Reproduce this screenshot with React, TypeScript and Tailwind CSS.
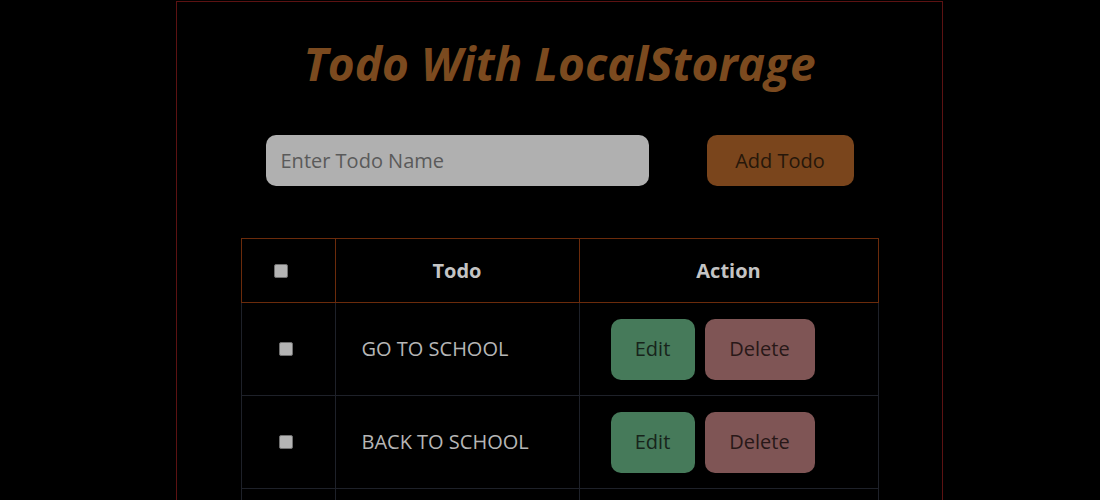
import { useState } from "react";

interface Todo {
  id: number;
  name: string;
  done: boolean;
}

const initialTodos: Todo[] = [
  { id: 1, name: "go to school", done: false },
  { id: 2, name: "back to school", done: false },
  { id: 3, name: "go to home", done: false },
];

const Checkbox = ({ checked, onChange }: { checked: boolean; onChange: () => void }) => (
  <input
    type="checkbox"
    checked={checked}
    onChange={onChange}
    className="appearance-none w-[14px] h-[14px] bg-[#b4b4b4] border border-[#6f6f6f] rounded-[2px] block"
  />
);

const App = () => {
  const [todos, setTodos] = useState<Todo[]>(initialTodos);
  const [name, setName] = useState("");
  const allDone = todos.length > 0 && todos.every((t) => t.done);

  const addTodo = () => {
    if (!name.trim()) return;
    setTodos([...todos, { id: Date.now(), name: name.trim(), done: false }]);
    setName("");
  };

  return (
    <div className="min-h-screen bg-black font-['Open_Sans',sans-serif] overflow-hidden">
      <div className="ml-[176px] mt-px w-[767px] h-[520px] border border-[#5c1212] flex flex-col items-center">
        <h1 className="mt-[29px] text-[46px] leading-[64px] font-bold italic text-[#7b4a1f]">
          Todo With LocalStorage
        </h1>

        <div className="mt-[40px] flex items-center gap-[58px]">
          <input
            value={name}
            onChange={(e) => setName(e.target.value)}
            onKeyDown={(e) => {
              if (e.key === "Enter") addTodo();
            }}
            placeholder="Enter Todo Name"
            className="w-[383px] h-[51px] rounded-[10px] bg-[#b0b0b0] pl-[15px] text-[20px] text-[#333] placeholder:text-[#5a5a5a] outline-none"
          />
          <button
            onClick={addTodo}
            className="w-[147px] h-[51px] rounded-[10px] bg-[#7a451c] text-[20px] text-[#26170a]"
          >
            Add Todo
          </button>
        </div>

        <table className="mt-[52px] w-[638px] border-collapse text-[20px]">
          <thead>
            <tr className="h-[64px]">
              <th className="w-[94px] border border-[#6b2b0b] pl-[32px]">
                <Checkbox
                  checked={allDone}
                  onChange={() => setTodos(todos.map((t) => ({ ...t, done: !allDone })))}
                />
              </th>
              <th className="w-[244px] border border-[#6b2b0b] font-bold text-[#c4c4c4]">Todo</th>
              <th className="border border-[#6b2b0b] font-bold text-[#c4c4c4]">Action</th>
            </tr>
          </thead>
          <tbody>
            {todos.map((todo) => (
              <tr key={todo.id} className="h-[93px]">
                <td className="border border-[#1e2129] pl-[37px]">
                  <Checkbox
                    checked={todo.done}
                    onChange={() =>
                      setTodos(todos.map((t) => (t.id === todo.id ? { ...t, done: !t.done } : t)))
                    }
                  />
                </td>
                <td className="border border-[#1e2129] pl-[26px] uppercase text-[#b6b6b6]">
                  {todo.name}
                </td>
                <td className="border border-[#1e2129] pl-[31px]">
                  <div className="flex gap-[10px]">
                    <button className="w-[84px] h-[61px] rounded-[10px] bg-[#467a5a] text-[#17241b]">
                      Edit
                    </button>
                    <button
                      onClick={() => setTodos(todos.filter((t) => t.id !== todo.id))}
                      className="w-[110px] h-[61px] rounded-[10px] bg-[#7f5555] text-[#281818]"
                    >
                      Delete
                    </button>
                  </div>
                </td>
              </tr>
            ))}
          </tbody>
        </table>
      </div>
    </div>
  );
};

export default App;
